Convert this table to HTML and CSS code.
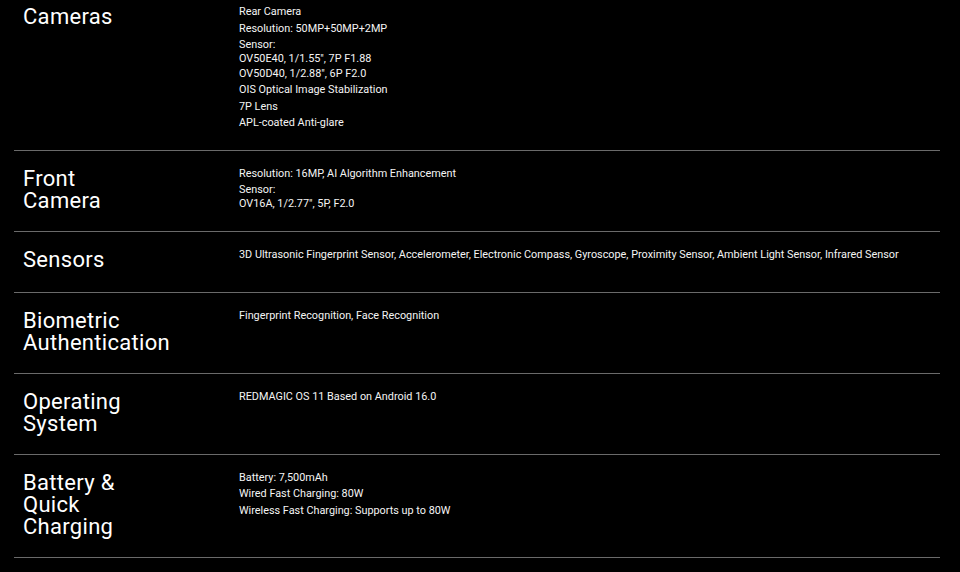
FILE: index.html
```html
<!DOCTYPE html>
<html>
<head>
<meta charset="utf-8">
<link rel="stylesheet" href="styles.css">
</head>
<body>
<div class="specs">
  <div class="row">
    <h3 class="label">Cameras</h3>
    <div class="value">
      <p>Rear Camera</p>
      <p>Resolution: 50MP+50MP+2MP</p>
      <p>Sensor:<br>OV50E40, 1/1.55", 7P F1.88<br>OV50D40, 1/2.88", 6P F2.0</p>
      <p>OIS Optical Image Stabilization</p>
      <p>7P Lens</p>
      <p>APL-coated Anti-glare</p>
    </div>
  </div>
  <div class="row">
    <h3 class="label">Front<br>Camera</h3>
    <div class="value">
      <p>Resolution: 16MP, AI Algorithm Enhancement</p>
      <p>Sensor:<br>OV16A, 1/2.77", 5P, F2.0</p>
    </div>
  </div>
  <div class="row">
    <h3 class="label">Sensors</h3>
    <div class="value">
      <p>3D Ultrasonic Fingerprint Sensor, Accelerometer, Electronic Compass, Gyroscope, Proximity Sensor, Ambient Light Sensor, Infrared Sensor</p>
    </div>
  </div>
  <div class="row">
    <h3 class="label">Biometric<br>Authentication</h3>
    <div class="value">
      <p>Fingerprint Recognition, Face Recognition</p>
    </div>
  </div>
  <div class="row">
    <h3 class="label">Operating<br>System</h3>
    <div class="value">
      <p>REDMAGIC OS 11 Based on Android 16.0</p>
    </div>
  </div>
  <div class="row">
    <h3 class="label">Battery &amp;<br>Quick<br>Charging</h3>
    <div class="value">
      <p>Battery: 7,500mAh</p>
      <p>Wired Fast Charging: 80W</p>
      <p>Wireless Fast Charging: Supports up to 80W</p>
    </div>
  </div>
</div>
</body>
</html>
```
FILE: styles.css
```css
html, body {
  margin: 0;
  padding: 0;
  background: #000;
  overflow: hidden;
}
body {
  width: 960px;
  height: 572px;
}
.specs {
  margin: -11px 20px 0 14px;
}
.row {
  display: grid;
  grid-template-columns: 216px 1fr;
  padding: 17px 0 19px 9px;
  border-bottom: 1px solid #6a6a6a;
}
.label {
  margin: 0;
  min-height: 24px;
  font-family: Roboto, "Liberation Sans", sans-serif;
  font-weight: 400;
  font-size: 22px;
  line-height: 22px;
  letter-spacing: 0.3px;
  color: #fff;
}
.value {
  margin-top: -1px;
  font-family: Roboto, "Liberation Sans", sans-serif;
  font-size: 10.85px;
  line-height: 14.2px;
  color: #f4f4f4;
}
.value p {
  margin: 0 0 2.4px;
}
.value p:last-child {
  margin-bottom: 0;
}
```
